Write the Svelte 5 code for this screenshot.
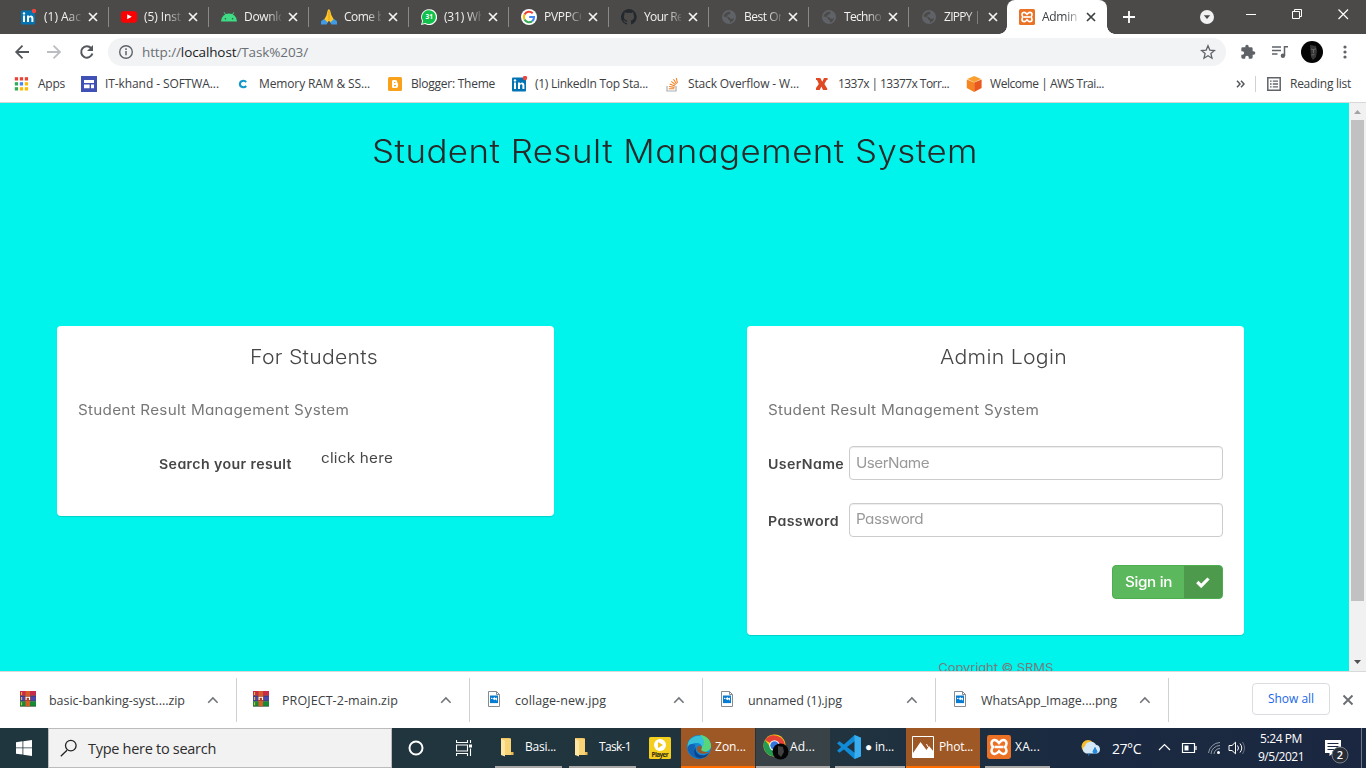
<script>
  // Tightens or opens the tracking so a label occupies its intended width.
  function fit(node, width) {
    const natural = node.getBoundingClientRect().width;
    node.style.letterSpacing = (width - natural) / node.textContent.length + 'px';
  }

  // Same, with letterforms widened for the page's geometric look.
  function wide(node, width) {
    const natural = node.getBoundingClientRect().width;
    const stretch = 1.09;
    node.style.display = 'inline-block';
    node.style.width = width + 'px';
    node.style.transformOrigin = '0 50%';
    node.style.transform = `scaleX(${stretch})`;
    node.style.letterSpacing = (width / stretch - natural) / node.textContent.length + 'px';
  }

  const tabs = [
    { icon: 'linkedin', title: '(1) Aac', w: 37 },
    { icon: 'youtube', title: '(5) Inst', w: 37 },
    { icon: 'android', title: 'Downlo', w: 41 },
    { icon: 'pray', title: 'Come b', w: 40 },
    { icon: 'whatsapp', title: '(31) Wh', w: 41 },
    { icon: 'google', title: 'PVPPCO', w: 44 },
    { icon: 'github', title: 'Your Re', w: 39 },
    { icon: 'globe', title: 'Best On', w: 41 },
    { icon: 'globe', title: 'Techno', w: 37 },
    { icon: 'globe', title: 'ZIPPY |', w: 36 },
    { icon: 'xampp', title: 'Admin', w: 35, active: true }
  ];

  const bookmarks = [
    { icon: 'apps', title: 'Apps', w: 27, box: 68, gap: 9 },
    { icon: 'sites', title: 'IT-khand - SOFTWA...', w: 114, box: 154, gap: 8 },
    { icon: 'cc', title: 'Memory RAM & SS...', w: 111, box: 152, gap: 8 },
    { icon: 'blogger', title: 'Blogger: Theme', w: 84, box: 125, gap: 8 },
    { icon: 'linkedin', title: '(1) LinkedIn Top Sta...', w: 113, box: 152, gap: 7 },
    { icon: 'stack', title: 'Stack Overflow - W...', w: 111, box: 150, gap: 8 },
    { icon: 'ex', title: '1337x | 13377x Torr...', w: 111, box: 152, gap: 8 },
    { icon: 'aws', title: 'Welcome | AWS Trai...', w: 114, box: 150, gap: 8 }
  ];

  const downloads = [
    { icon: 'rar', title: 'basic-banking-syst....zip', w: 136 },
    { icon: 'rar', title: 'PROJECT-2-main.zip', w: 116 },
    { icon: 'image', title: 'collage-new.jpg', w: 91 },
    { icon: 'image', title: 'unnamed (1).jpg', w: 94 },
    { icon: 'image', title: 'WhatsApp_Image....png', w: 136 }
  ];
</script>

{#snippet icon(name, size)}
  <svg class="icon" width={size} height={size} viewBox="0 0 16 16">
    {#if name === 'linkedin'}
      <rect x="0" y="1.5" width="14" height="14" rx="1" fill="#0274b3" />
      <rect x="2" y="6.5" width="2" height="6.5" fill="#fff" /><circle cx="3" cy="4.4" r="1.2" fill="#fff" />
      <path d="M6 13V6.5h1.9v1C9.4 5.7 12.4 6 12.4 9.3V13h-2V9.7c0-2-2.4-2-2.4 0V13z" fill="#fff" />
      <circle cx="13" cy="2" r="2.2" fill="#f0443c" />
    {:else if name === 'youtube'}
      <rect x="0" y="2.3" width="16" height="11.5" rx="2.7" fill="#f00" /><path d="M6.2 5.3v5l4.6-2.5z" fill="#fff" />
    {:else if name === 'android'}
      <path d="M0 12.5a8 8 0 0 1 16 0z" fill="#3ddc84" /><path d="M3.2 3.3 5 6.5M12.8 3.3 11 6.5" stroke="#3ddc84" stroke-width=".9" />
      <circle cx="4.4" cy="9.8" r=".8" fill="#4c4a48" /><circle cx="11.6" cy="9.8" r=".8" fill="#4c4a48" />
    {:else if name === 'pray'}
      <path d="M7.8.2c-1.5 0-1.4 4-2.5 6.5L2.7 11.3 6 14l2-2.2L10 14l3.3-2.7-2.6-4.6C9.6 4.2 9.5.2 7.8.2z" fill="#ffc629" />
      <path d="M8 2v9" stroke="#e4950f" stroke-width=".8" /><path d="M0 12.3 3 10l3.8 3.4-1.3 2.2H0zM16 12.3 13 10l-3.8 3.4 1.3 2.2H16z" fill="#3f9be8" />
    {:else if name === 'whatsapp'}
      <path d="M0 16 1.1 12A8 8 0 1 1 4 15z" fill="#fff" /><path d="m1.2 14.8.9-3A6.9 6.9 0 1 1 4.4 14z" fill="#12c14c" />
      <text x="8.2" y="10.3" font-size="6.5" font-weight="700" text-anchor="middle" fill="#fff">31</text>
    {:else if name === 'google'}
      <circle cx="8" cy="8" r="8" fill="#fff" />
      <path d="M3.5 5.4a5.2 5.2 0 0 1 8.2-1.1" fill="none" stroke="#ea4335" stroke-width="2.1" /><path d="M3.5 5.4a5.4 5.4 0 0 0 0 5.2" fill="none" stroke="#fbbc05" stroke-width="2.1" />
      <path d="M3.5 10.6a5.2 5.2 0 0 0 7.8 1.5" fill="none" stroke="#34a853" stroke-width="2.1" /><path d="M8.2 8H13c0 2-.6 3.2-1.7 4.1" fill="none" stroke="#4285f4" stroke-width="2.1" />
    {:else if name === 'github'}
      <path fill="#24292e" d="M8 0a8 8 0 0 0-2.500 15.600c.4.1.5-.2.5-.4v-1.500c-2.200.5-2.700-1-2.700-1-.4-.9-.9-1.200-.9-1.200-.7-.5.1-.5.1-.5.8.1 1.200.8 1.200.8.7 1.300 1.900.9 2.300.7.1-.5.3-.9.5-1.100-1.800-.2-3.600-.9-3.600-4 0-.9.3-1.600.8-2.100-.1-.2-.4-1 .1-2.100 0 0 .7-.2 2.200.8a7.500 7.500 0 0 1 4 0c1.500-1 2.200-.8 2.200-.8.4 1.100.2 1.900.1 2.100.5.6.8 1.300.8 2.100 0 3.100-1.900 3.800-3.700 4 .3.2.6.7.6 1.500v2.200c0 .2.1.5.5.4A8 8 0 0 0 8 0z" />
    {:else if name === 'globe'}
      <circle cx="8" cy="8" r="7" fill="#5f6368" /><path d="M2.300 7.300C3.400 4.700 5.600 3 8.400 2.600l1.200 1.200-.8 1.500-2 .4-.5 1.500-1.300.6 3 .3 1.100 1.500 2.600.3 1.300-1.400c.1 2.500-1.700 4.600-4.200 5l.2-2-1.800-1-.5-1.700z" fill="#4c4a48" />
    {:else if name === 'xampp'}
      <rect x="0" y="0" width="16" height="16" rx="1.6" fill="#eb7225" />
      <path d="M5.2 3.3c1.2 0 2.8 2 2.8 2s1.6-2 2.8-2 2.2.9 2.2 2.2S12 8 12 8s1 1.2 1 2.5-1 2.2-2.2 2.2S8 10.8 8 10.8s-1.6 1.9-2.8 1.9S3 11.8 3 10.5 4 8 4 8 3 6.8 3 5.5s1-2.2 2.2-2.2z" fill="none" stroke="#fff" stroke-width="1.7" />
      <path d="M5 8h6" stroke="#fff" stroke-width="1.7" />
    {:else if name === 'apps'}
      {#each ['#ea4335', '#ea4335', '#ea4335', '#34a853', '#4285f4', '#fbbc05', '#34a853', '#fbbc05', '#fbbc05'] as c, i}
        <rect x={1.8 + (i % 3) * 5} y={1.2 + Math.floor(i / 3) * 5} width="3.3" height="3.3" fill={c} />
      {/each}
    {:else if name === 'sites'}
      <rect width="16" height="16" fill="#3f51b5" /><path d="M3 4h10v3H3zM3 8.500h5.600v3.800H3zM10 8.500h3v3.800h-3z" fill="#fff" />
    {:else if name === 'cc'}
      <path d="M11.200 6C9.200 3.800 4.900 4.600 4.900 8s4.300 4.200 6.300 2" fill="none" stroke="#1597c9" stroke-width="2.1" />
    {:else if name === 'blogger'}
      <rect x="1" y="1" width="14" height="14" rx="1.5" fill="#f9a11b" />
      <path d="M5 10.500v-5C5 4.500 5.500 4 6.500 4h1.600c1.800 0 2.200 1.200 2.200 2.400 0 .7.8.7.8 1.400v1.600c0 1.700-.8 2.600-2.500 2.600H6.500C5.500 12 5 11.500 5 10.500z" fill="#fff" />
      <path d="M7 6.500h1.300M7 9.600h2" stroke="#f9a11b" stroke-width="1.1" />
    {:else if name === 'stack'}
      <path d="M3 10v5h9v-5" fill="none" stroke="#a9aeb3" stroke-width="1.2" /><path d="M4.800 12.700h5.500M5 10.500l5.500.9M5.700 8l5.200 2.100M7.300 5.400l4.300 3.500M9.500 3.200 12.500 8M12.300 2l1.100 5.200" stroke="#f48024" stroke-width="1.1" />
    {:else if name === 'ex'}
      <path d="M2 2h4.300l2 3.700L10 2h3.600v2h-1l-2.200 4 2.800 4.400V14H9l-1.600-3.600L5.700 14H2v-2l2.800-4L3 4H2z" fill="#df4a24" />
    {:else if name === 'aws'}
      <path d="m8.200 0 7 3-7 3.300-7-3.300z" fill="#fba02e" /><path d="m.8 3.400 7.400 3.200V16l-7.400-4z" fill="#f58421" /><path d="m15.600 3.400-7.400 3.200V16l7.400-4z" fill="#e9591e" />
    {:else if name === 'rar'}
      <rect x="0" y="0" width="16" height="4.8" fill="#c72a4b" /><rect y="5" width="16" height="5" fill="#4c47ac" /><rect y="10.3" width="16" height="4.9" fill="#168b35" />
      <path d="M0 4.900h16M0 10.100h16M0 15.300h16" stroke="#202a26" stroke-width=".6" /><path d="M1.600 1v3M1.600 6v3M1.600 11.300v3" stroke="#e7cb38" />
      <rect x="5.5" width="4.5" height="15.3" fill="#d65e26" /><rect x="4.9" y="5" width="5.8" height="4.8" rx=".6" fill="#ab3d22" /><path d="M6.100 9V6.300h3.400V9" fill="none" stroke="#fff" stroke-width="1.1" />
    {:else if name === 'image'}
      <path d="M2.500.5h8l3 3v12h-11z" fill="#fff" stroke="#858b90" /><path d="M10.500.5v3h3" fill="none" stroke="#858b90" />
      <rect x="4" y="4.500" width="8" height="7.600" fill="#087bd2" /><path d="m5 6.500 1.800 1.200L8.300 6l1 1.300L11 6.500v3.300L9.300 8.200l-1 1-1.300-1.200L5 8z" fill="#fff" />
    {/if}
  </svg>
{/snippet}

{#snippet chevron()}
  <svg class="chevron" width="12" height="8" viewBox="0 0 12 8"><path d="m1.2 6.700 4.700-4.700 4.700 4.700" fill="none" stroke="#717478" stroke-width="1.6" /></svg>
{/snippet}

{#snippet cross(color)}
  <svg width="10" height="10" viewBox="0 0 10 10"><path d="m1 1 8 8M9 1 1 9" stroke={color} stroke-width="1.7" /></svg>
{/snippet}

<div class="screen">
  <div class="tabstrip">
    {#each tabs as t, i}
      <div class="tab" class:active={t.active} class:last={i === 9}>
        {@render icon(t.icon, 16)}
        <span class="title"><span use:fit={t.w}>{t.title}</span></span>
        {@render cross(t.active ? '#3c4043' : '#f5f5f5')}
      </div>
    {/each}
    <svg class="newtab" width="14" height="14" viewBox="0 0 14 14"><path d="M7 1v12M1 7h12" stroke="#fff" stroke-width="1.8" /></svg>
    <svg class="search-tabs" width="14" height="14" viewBox="0 0 14 14"><circle cx="7" cy="7" r="7" fill="#f1f1f1" /><path d="M3.800 5.200h6.400L7 9z" fill="#4c4a48" /></svg>
    <svg class="winctl" width="104" height="14" viewBox="0 0 104 14"><g fill="none" stroke="#fff"><path d="M0 7.500h10M46.500 4.500h7v7h-7zM48.500 4.500v-2h7v7h-2" /><path d="m92.500 2.500 9.500 9.500M102 2.500 92.500 12" stroke-width="1.200" /></g></svg>
  </div>

  <div class="toolbar">
    <svg class="nav" width="84" height="18" viewBox="0 0 84 18" fill="none">
      <path d="M15 9H2.500M8.500 2.700 2.200 9l6.300 6.300" stroke="#54575b" stroke-width="1.800" />
      <path d="M33 9h13M39.500 2.700 46 9l-6.500 6.300" stroke="#bbbdc0" stroke-width="1.800" />
      <path d="M77.200 5.200A5.700 5.700 0 1 0 78.400 10.500" stroke="#54575b" stroke-width="2" /><path d="M79 2v6h-6z" fill="#54575b" />
    </svg>
    <div class="omnibox">
      <svg width="16" height="16" viewBox="0 0 16 16"><circle cx="8" cy="8" r="6.300" fill="none" stroke="#5f6368" stroke-width="1.400" /><path d="M8 7v4.300M8 4.300v1.600" stroke="#5f6368" stroke-width="1.500" /></svg>
      <span class="url"><span use:fit={166}>http://<b>localhost</b>/Task%203/</span></span>
      <svg class="star" width="16" height="16" viewBox="0 0 16 16"><path d="m8 1.800 1.800 4.300 4.700.4-3.600 3.100 1.100 4.600L8 11.800l-4 2.400 1.100-4.600-3.600-3.100 4.700-.4z" fill="none" stroke="#5f6368" stroke-width="1.300" /></svg>
    </div>
    <svg class="puzzle" width="16" height="16" viewBox="0 0 24 24"><path fill="#5f6368" d="M20.500 11H19V7a2 2 0 0 0-2-2h-4V3.500a2.500 2.500 0 0 0-5 0V5H4a2 2 0 0 0-2 2v3.800h1.500a2.700 2.700 0 0 1 0 5.400H2V20c0 1.100.9 2 2 2h3.800v-1.500a2.700 2.700 0 0 1 5.400 0V22H17a2 2 0 0 0 2-2v-4h1.500a2.500 2.500 0 0 0 0-5z" /></svg>
    <svg class="media" width="16" height="14" viewBox="0 0 16 14"><path d="M0 2h9M0 5.500h9M0 9h5.500M12.500 11V1.700H16" fill="none" stroke="#5f6368" stroke-width="1.500" /><circle cx="10.900" cy="10.800" r="2.200" fill="#5f6368" /></svg>
    <svg class="avatar" width="22" height="22" viewBox="0 0 22 22"><circle cx="11" cy="11" r="11" fill="#050505" /><path d="m9 4 6 1 1 5-1 6-3 3-2-3z" fill="#373737" /><path d="m10 8 2 .8 3-1M10.500 14l3-.5M12.500 9v3" fill="none" stroke="#757575" stroke-width=".8" /></svg>
    <svg class="kebab" width="4" height="14" viewBox="0 0 4 14"><g fill="#5f6368"><circle cx="2" cy="2" r="1.600" /><circle cx="2" cy="7" r="1.600" /><circle cx="2" cy="12" r="1.600" /></g></svg>
  </div>

  <div class="bookmarks">
    {#each bookmarks as b}
      <div class="bookmark" style:width="{b.box}px" style:gap="{b.gap}px">{@render icon(b.icon, 16)}<span use:fit={b.w}>{b.title}</span></div>
    {/each}
    <svg class="more" width="9" height="8" viewBox="0 0 9 8"><path d="m1 .8 3 3.200-3 3.200M5 .8 8 4 5 7.200" fill="none" stroke="#54575b" stroke-width="1.500" /></svg>
    <i class="rule"></i>
    <svg class="listicon" width="14" height="14" viewBox="0 0 14 14"><path d="M.8.800h12.400v12.400H.8z" fill="none" stroke="#5f6368" stroke-width="1.500" /><path d="M3 4.200h1.600M3 7h1.600M3 9.800h1.600M5.800 4.200H11M5.800 7H11M5.800 9.800H11" stroke="#5f6368" stroke-width="1.300" /></svg>
    <span use:fit={61}>Reading list</span>
  </div>

  <div class="viewport">
    <div class="page">
      <h1><span use:wide={606}>Student Result Management System</span></h1>
      <div class="panels">
        <section class="panel">
          <h2><span use:wide={128}>For Students</span></h2>
          <p><span use:wide={271}>Student Result Management System</span></p>
          <div class="result"><strong><span use:wide={133}>Search your result</span></strong><a href="#result"><span use:wide={72}>click here</span></a></div>
        </section>
        <div class="column">
          <section class="panel login">
            <h2><span use:wide={127}>Admin Login</span></h2>
            <p><span use:wide={271}>Student Result Management System</span></p>
            <div class="field"><strong><span use:wide={76}>UserName</span></strong><div class="input"><span use:wide={73}>UserName</span></div></div>
            <div class="field"><strong><span use:wide={71}>Password</span></strong><div class="input second-input"><span use:wide={67}>Password</span></div></div>
            <div class="actions">
              <button><span class="text"><span use:wide={47}>Sign in</span></span><span class="check"><svg width="14" height="12" viewBox="0 0 14 12"><path d="m1.300 6 3.900 3.900 7.300-7.400" fill="none" stroke="#fff" stroke-width="3.200" /></svg></span></button>
            </div>
          </section>
          <footer><span use:wide={115}>Copyright © SRMS</span></footer>
        </div>
      </div>
    </div>
    <div class="scrollbar">
      <svg width="17" height="17" viewBox="0 0 17 17"><path d="m5 11 3.500-4 3.500 4z" fill="#a3a3a3" /></svg>
      <i></i>
      <svg width="17" height="17" viewBox="0 0 17 17"><path d="m5 6 3.500 4L12 6z" fill="#505050" /></svg>
    </div>
  </div>

  <div class="downloads">
    {#each downloads as d}
      <div class="download">{@render icon(d.icon, 16)}<span class="file"><span use:fit={d.w}>{d.title}</span></span>{@render chevron()}</div>
    {/each}
    <div class="showall"><span use:fit={46}>Show all</span></div>
    <svg class="dismiss" width="12" height="12" viewBox="0 0 12 12"><path d="m1.500 1.500 9 9M10.500 1.500l-9 9" stroke="#6b6e72" stroke-width="1.900" /></svg>
  </div>

  <div class="taskbar">
    <div class="start"><svg width="16" height="16" viewBox="0 0 16 16"><path d="M0 2.200 6.500 1.300v6.200H0zM7.300 1.200 16 0v7.500H7.300zM0 8.300h6.500v6.300L0 13.700zM7.300 8.300H16V16l-8.700-1.200z" fill="#fff" /></svg></div>
    <div class="search"><svg width="18" height="18" viewBox="0 0 18 18"><path d="M7 11.200.800 17.200" stroke="#222" stroke-width="1.300" /><circle cx="10.800" cy="6.600" r="5.300" fill="none" stroke="#222" stroke-width="1.300" /></svg><span class="prompt"><span use:fit={128}>Type here to search</span></span></div>
    <div class="cortana"><svg width="16" height="16" viewBox="0 0 16 16"><circle cx="8" cy="8" r="6.500" fill="none" stroke="#fff" stroke-width="2" /></svg></div>
    <div class="taskview"><svg width="16" height="16" viewBox="0 0 16 16"><path d="M.5 0v2.500h11V0M.5 16v-2.500h11V16M.5 5h11v6H.5zM14.500 0v3M14.500 8.500V16" fill="none" stroke="#fff" stroke-width="1.100" /><rect x="13" y="4.500" width="3" height="3" fill="#fff" /></svg></div>

    <div class="app folder">
      <svg width="16" height="20" viewBox="0 0 16 20"><path d="M1 1h8l2 1v13h2.500V18H1z" fill="#e9b853" /><path d="M2 1.500h9V18H4z" fill="#f8d477" /><path d="M1 1.500 5 4v15.500L1 18z" fill="#ffe6a3" /></svg>
      <span use:fit={31}>Basi...</span>
    </div>
    <div class="app folder">
      <svg width="16" height="20" viewBox="0 0 16 20"><path d="M1 1h8l2 1v13h2.500V18H1z" fill="#e9b853" /><path d="M2 1.500h9V18H4z" fill="#f8d477" /><path d="M1 1.500 5 4v15.500L1 18z" fill="#ffe6a3" /></svg>
      <span use:fit={32}>Task-1</span>
    </div>
    <div class="player"><svg width="22" height="22" viewBox="0 0 22 22"><rect width="22" height="22" rx="1.500" fill="#f5cf1e" /><circle cx="11" cy="8" r="6" fill="#fff" /><path d="m9 5 5 3-5 3z" fill="#f0c414" /><text x="11" y="19.800" font-size="6.300" font-weight="700" text-anchor="middle" textLength="17" fill="#322d13">Player</text></svg></div>
    <div class="app hot edge">
      <svg width="24" height="24" viewBox="0 0 24 24"><circle cx="12" cy="12" r="12" fill="#1688d4" /><path d="M.8 9C3-1.500 21-3 24 10c.5 5-3.500 7-7.500 6.500-2-.3-3-1.500-2-2.800C16 11 14 8 10 8c-4.500 0-8 2-9.200 5z" fill="#36c0d9" /><path d="M13 0c6 .3 10.700 5 11 10.500.2 4.500-4 6.700-7.500 6-2-.3-3-1.500-2-2.800C18 9 18 4 13 0z" fill="#58d67c" /><path d="M8.500 10C5 16 9 23 15 23.600c-7 1.200-14-4-14.500-10C1 9 5 8 8.500 10z" fill="#1263b4" /><path d="M9 12c-2 6 5 11.500 13 6-3 6-11 7-14 2-1.500-3-1-6 1-8z" fill="#0a458c" /><path d="M13 10.500c-3 .5-4 3-2.500 5.500 2 3 7 4 11.500 1-5 .5-9-1-7.500-3.500.6-1 0-2-1.500-3z" fill="#9d5826" /></svg>
      <span use:fit={31}>Zon...</span>
    </div>
    <div class="app chrome">
      <svg width="26" height="26" viewBox="0 0 26 26"><circle cx="11.500" cy="11.500" r="11" fill="#fbc916" /><path d="M11.500 11.500H22A11 11 0 0 0 2 6z" fill="#e44134" /><path d="M2 6a11 11 0 0 0 9.500 16.500l4.500-9-9-1z" fill="#239c51" /><circle cx="11.500" cy="11.500" r="5.200" fill="#fff" /><circle cx="11.500" cy="11.500" r="4.200" fill="#3575df" /><circle cx="17.500" cy="17.500" r="8" fill="#050505" /><path d="m15 12 5 1 1 5-3 5-3-3z" fill="#414141" /></svg>
      <span use:fit={25}>Ad...</span>
    </div>
    <div class="app code">
      <svg width="24" height="24" viewBox="0 0 24 24"><path d="M17.500 0 24 2.800v18.400L17.500 24 0 8.200l2.500-2L18 18V6L2.500 17.800 0 15.800z" fill="#118bd5" /><path d="M17.500 0 24 2.800v18.400L17.500 24z" fill="#38adf0" /></svg>
      <span use:fit={29}>● in...</span>
    </div>
    <div class="app hot photos">
      <svg width="22" height="22" viewBox="0 0 22 22"><path d="M.5.500h21v21H.5z" fill="none" stroke="#fff" /><path d="M1 17 8.500 6l6 8 2.500-4 5 6v6H1z" fill="#fff" /><path d="m14.500 8 1.500 3" stroke="#fff" /></svg>
      <span use:fit={34}>Phot...</span>
    </div>
    <div class="app xampp">{@render icon('xampp', 24)}<span use:fit={25}>XA...</span></div>

    <svg class="weather" width="21" height="17" viewBox="0 0 21 17"><circle cx="7" cy="6.500" r="6.500" fill="#f7bd2c" /><path d="M5 13.500a4 4 0 0 1-1-7.500A6 6 0 0 1 15 4.800a4.500 4.500 0 0 1 1 8.700z" fill="#d4e7f7" /><path d="m14 7.500-2 4c0 2.500 4 2.500 4 0zM8.500 13 7.500 15.500" fill="#2389df" stroke="#2389df" /></svg>
    <span class="temp"><span use:fit={29}>27°C</span></span>
    <svg class="tray" width="88" height="16" viewBox="0 0 88 16" fill="none" stroke="#fff">
      <path d="m1 10 5.500-5.500L12 10" stroke-width="1.200" />
      <path d="M24.500 3.500h12v9h-12zM38 6v4" stroke-width="1.200" /><path d="M26.500 5.500h4v5h-4z" fill="#fff" stroke="none" />
      <g stroke="#929aa5"><path d="M50.500 13A12 12 0 0 1 62 2.500M53 14a9 9 0 0 1 9-8.500M56 14a6 6 0 0 1 6-5.500" /></g><circle cx="60.500" cy="12.500" r="1.500" fill="#fff" stroke="none" />
      <path d="M71 5.500h3l3.500-3.300v11.600L74 10.500h-3zM79.500 5.500q2 2.500 0 5M82 3.500q3.500 4.500 0 9" /><path d="M84.500 2q4 6 0 12" stroke="#69717d" />
    </svg>
    <div class="clock"><span use:fit={42}>5:24 PM</span><span use:fit={46}>9/5/2021</span></div>
    <svg class="notice" width="25" height="25" viewBox="0 0 25 25"><path d="M1 1h16v13H9.500l-4 3v-3H1z" fill="#fff" /><path d="M3.500 4.500h11M3.500 7.500h11M3.500 10.500h7" stroke="#1b2840" /><circle cx="16" cy="16" r="8" fill="#292e36" stroke="#77808b" /><text x="16" y="20" text-anchor="middle" font-size="11" font-weight="600" fill="#fff">2</text></svg>
    <i class="peek"></i>
  </div>
</div>

<style>
  :global(body) { margin: 0; overflow: hidden; }
  .screen { width: 1366px; height: 768px; display: flex; flex-direction: column; overflow: hidden; font: 12px/16px "Open Sans", "Noto Sans", sans-serif; color: #3c4043; background: #fff; }
  .screen * { box-sizing: border-box; }
  span { white-space: nowrap; }
  svg { display: block; flex: none; }

  .tabstrip { height: 34px; flex: none; display: flex; align-items: center; padding-left: 9px; background: #4c4a48; color: #f1f1f1; }
  .tab { width: 100px; height: 34px; flex: none; display: flex; align-items: center; padding-left: 12px; background: linear-gradient(#8b8988, #8b8988) right 7px / 1px 20px no-repeat; }
  .tab .title { width: 37px; height: 16px; margin: 0 7px 0 7px; overflow: hidden; -webkit-mask-image: linear-gradient(90deg, #000 62%, transparent 108%); mask-image: linear-gradient(90deg, #000 62%, transparent 108%); }
  .tab.last { width: 98px; background: none; }
  .tab.active { background: #fff; color: #3c4043; border-radius: 8px 8px 0 0; position: relative; }
  .tab.active::before, .tab.active::after { content: ""; position: absolute; bottom: 0; width: 8px; height: 8px; }
  .tab.active::before { left: -8px; background: radial-gradient(circle at 0 0, transparent 7.5px, #fff 8px); }
  .tab.active::after { right: -8px; background: radial-gradient(circle at 100% 0, transparent 7.5px, #fff 8px); }
  .newtab { margin-left: 15px; }
  .search-tabs { margin-left: 64px; }
  .winctl { margin: -6px 0 0 32px; }

  .toolbar { height: 36px; flex: none; display: flex; align-items: center; }
  .nav { margin-left: 14px; }
  .omnibox { margin-left: 10px; width: 1118px; height: 28px; border-radius: 14px; background: #f1f3f4; display: flex; align-items: center; padding: 0 10px; }
  .url { margin-left: 8px; font-size: 13.5px; color: #6b6f74; }
  .url b { font-weight: 400; color: #202124; }
  .star { margin-left: auto; }
  .puzzle { margin-left: 14px; }
  .media { margin-left: 16px; }
  .avatar { margin-left: 13px; }
  .kebab { margin-left: 20px; }

  .bookmarks { height: 33px; flex: none; display: flex; align-items: center; padding: 0 0 5px 13px; border-bottom: 1px solid #d6d8da; }
  .bookmark { display: flex; align-items: center; flex: none; }
  .more { margin-left: 120px; }
  .rule { width: 1px; height: 16px; background: #cfd1d3; margin: 0 11px 0 10px; }
  .listicon { margin-right: 9px; }

  .viewport { height: 568px; flex: none; display: flex; overflow: hidden; background: #00f4ec; }
  .page { width: 1349px; overflow: hidden; font-family: Inter, sans-serif; font-feature-settings: "cv11"; color: #464646; }
  h1, h2, p { margin: 0; font-weight: 300; }
  h1 { padding-top: 28px; font-size: 32px; line-height: 42px; text-align: center; color: #292929; }
  h1 span, h2 span, footer span { text-align: left; }
  .panels { margin: 153px 105px 0 57px; display: flex; justify-content: space-between; align-items: flex-start; }
  .panel { width: 497px; height: 190px; padding: 0 21px; background: #fff; border-radius: 4px; box-shadow: 0 1px 1px rgba(0, 0, 0, .15); }
  .login { height: 309px; }
  h2 { padding-top: 19px; font-size: 19.5px; line-height: 24px; text-align: center; padding-left: 16px; font-weight: 350; }
  .login h2 { padding-left: 15px; }
  p { margin-top: 31px; font-size: 14px; line-height: 20px; color: #777; font-weight: 370; }
  strong { font-size: 13px; font-weight: 600; line-height: 20px; }
  .result { display: flex; margin: 28px 0 0 81px; }
  .result strong { width: 162px; margin-top: 6px; }
  a { color: #464646; text-decoration: none; font-size: 14px; font-weight: 370; line-height: 20px; }
  .field { display: flex; align-items: center; margin-top: 23px; }
  p + .field { margin-top: 26px; }
  .field strong { width: 81px; padding-top: 2px; }
  .input { flex: 1; height: 34px; padding: 6px; border: 1px solid #ccc; border-radius: 4px; box-shadow: inset 0 1px 1px rgba(0, 0, 0, .075); font-size: 14px; line-height: 20px; color: #999; }
  .second-input { padding-top: 5px; }
  .actions { display: flex; justify-content: flex-end; margin-top: 28px; }
  button { width: 111px; height: 34px; padding: 0; border: 1px solid #4cae4c; border-radius: 4px; overflow: hidden; background: #5cb85c; color: #fff; display: flex; font: 500 14px/20px Inter, sans-serif; }
  button .text { width: 71px; padding: 6px 0 0 12px; text-align: left; }
  .check { width: 38px; height: 32px; display: grid; place-items: center; background: #4d9a4d; }
  footer { padding: 24px 0 0; text-align: center; font-size: 12px; line-height: 18px; color: #777; }

  .scrollbar { width: 17px; background: #f1f1f1; display: flex; flex-direction: column; align-items: center; }
  .scrollbar i { width: 13px; height: 481px; background: #c1c1c1; margin-bottom: auto; }

  .downloads { height: 57px; flex: none; display: flex; align-items: center; padding-left: 4px; border-top: 1px solid #d7d9db; background: #fff; }
  .download { width: 233px; height: 44px; flex: none; display: flex; align-items: center; padding-left: 16px; border-right: 1px solid #cfd1d3; }
  .download .icon { margin-top: -2px; }
  .file { width: 157px; margin-left: 13px; font-size: 12.5px; padding-top: 2px; }
  .chevron { margin-left: 1px; }
  .showall { width: 78px; height: 32px; margin: -2px 12px 0 83px; border: 1px solid #dadce0; border-radius: 4px; text-align: center; line-height: 30px; color: #1967e8; font-weight: 500; }
  .dismiss { margin-top: -1px; }

  .taskbar { height: 40px; flex: none; display: flex; align-items: center; color: #fff; background: linear-gradient(90deg, #20363f 0%, #21343e 60%, #1a2a41 78%, #1b2740 100%); }
  .start { width: 48px; display: grid; place-items: center; }
  .search { width: 344px; height: 40px; padding-left: 11px; display: flex; align-items: center; gap: 10px; color: #2d2d2d; background: #f2f2f2; border: 1px solid #bcbcbc; font-size: 14.5px; }
  .prompt { padding-top: 2px; }
  .cortana { width: 48px; display: grid; place-items: center; }
  .taskview { width: 48px; display: grid; place-items: center; }
  .app { height: 40px; display: flex; align-items: center; gap: 4px; border-bottom: 2px solid #aba9a8; flex: none; }
  .folder { gap: 9px; padding-left: 5px; width: 67px; margin-left: 7px; }
  .player { width: 45px; padding-left: 13px; flex: none; }
  .hot { width: 74px; padding-left: 6px; background: #9d5826; border-color: #ff6d00; }
  .edge { margin-right: 1px; }
  .chrome { width: 74px; padding-left: 7px; gap: 1px; background: #394247; }
  .code { width: 70px; margin: 0 1px 0 5px; padding-left: 2px; }
  .photos { gap: 5px; }
  .xampp { width: 65px; padding-left: 2px; margin-left: 5px; }
  .weather { margin-left: 31px; }
  .temp { width: 29px; margin-left: 10px; font-size: 14px; padding-top: 1px; }
  .tray { margin-left: 17px; }
  .clock { width: 52px; margin-left: 9px; display: flex; flex-direction: column; align-items: center; line-height: 18px; margin-top: -1px; font-size: 12px; }
  .notice { margin: 6px 0 0 17px; }
  .peek { width: 1px; height: 40px; margin-left: 12px; background: #6d7684; }
</style>
